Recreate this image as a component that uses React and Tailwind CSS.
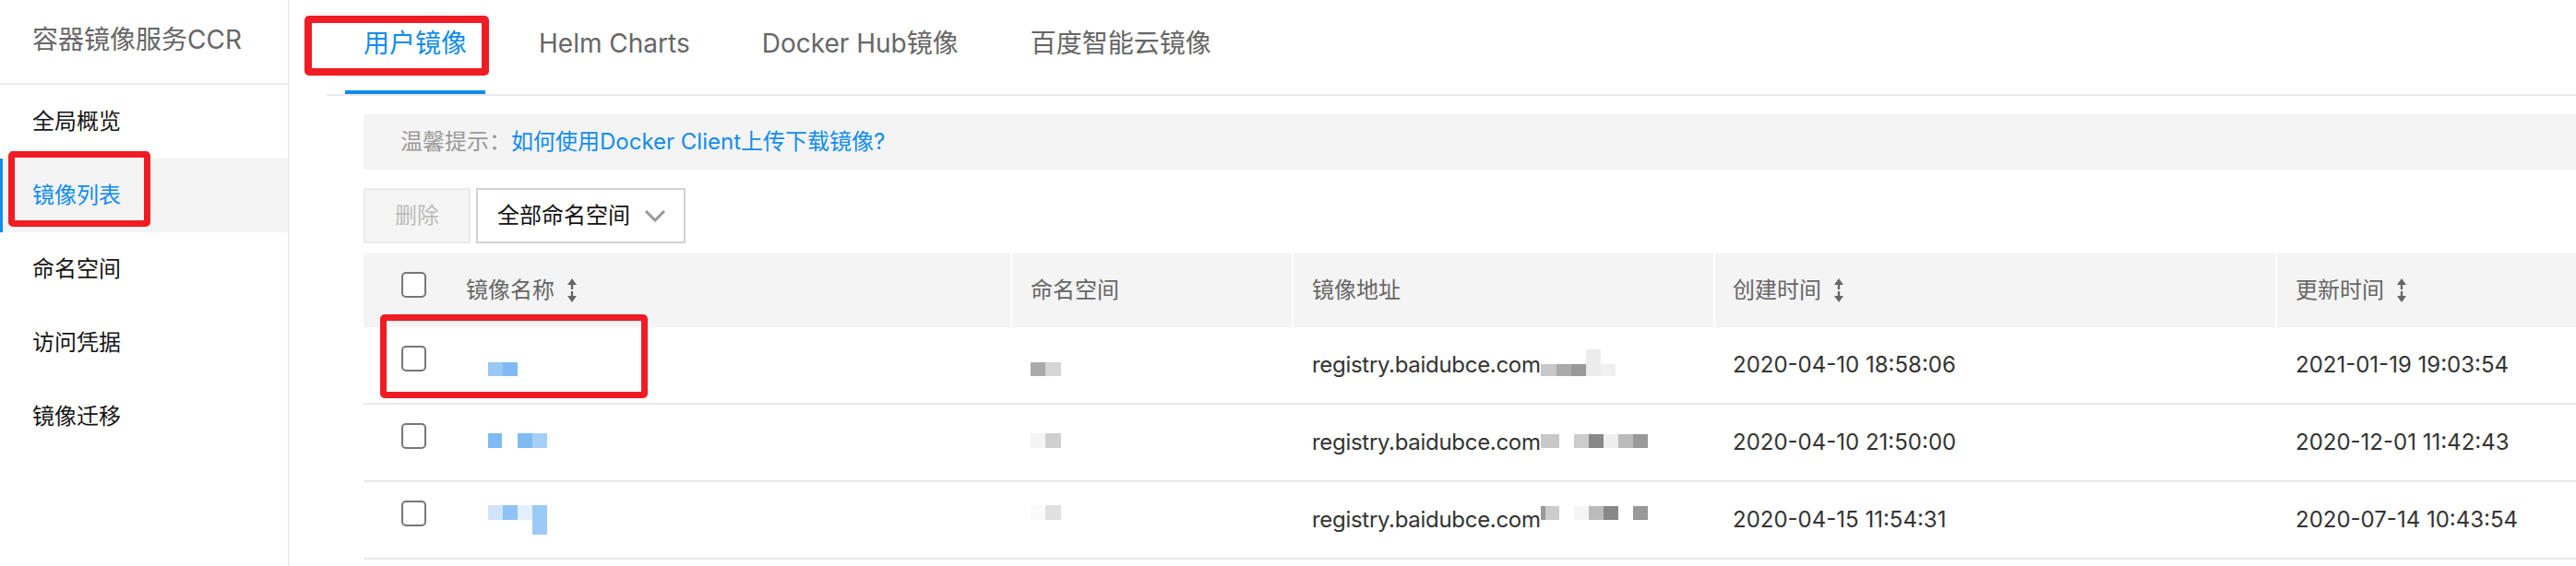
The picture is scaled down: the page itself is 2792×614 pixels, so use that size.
import React from 'react';

const menu = ['全局概览', '镜像列表', '命名空间', '访问凭据', '镜像迁移'];
const tabs = ['用户镜像', 'Helm Charts', 'Docker Hub镜像', '百度智能云镜像'];

// blurred cells from the screenshot: [x, y, w, h, fill]
const rows = [
  {
    name: [[0, 21, 16, 15, '#99c8f5'], [16, 21, 16, 15, '#7fbaf3']],
    ns: [[0, 21, 16, 15, '#aaaaaa'], [16, 21, 17, 15, '#d5d5d5']],
    addr: [[0, 23, 17, 13, '#c8c8c8'], [17, 23, 16, 13, '#aaaaaa'], [33, 23, 16, 13, '#999999'], [49, 7, 16, 29, '#ececec'], [65, 23, 16, 13, '#f0f0f0']],
    created: '2020-04-10 18:58:06',
    updated: '2021-01-19 19:03:54',
  },
  {
    name: [[0, 14, 15, 16, '#7fbaf3'], [32, 14, 16, 16, '#7fbaf3'], [48, 14, 16, 16, '#a6cff7']],
    ns: [[0, 14, 16, 16, '#f4f4f4'], [16, 14, 17, 16, '#cfcfcf']],
    addr: [[0, 15, 20, 15, '#c8c8c8'], [36, 15, 16, 15, '#cccccc'], [52, 15, 16, 15, '#888888'], [68, 15, 16, 15, '#eeeeee'], [84, 15, 16, 15, '#bbbbbb'], [100, 15, 16, 15, '#999999']],
    created: '2020-04-10 21:50:00',
    updated: '2020-12-01 11:42:43',
  },
  {
    name: [[0, 8, 16, 16, '#d0e5fb'], [16, 8, 16, 16, '#8fc2f5'], [32, 8, 16, 16, '#e3effc'], [48, 8, 16, 32, '#9ccaf6']],
    ns: [[0, 8, 16, 16, '#fafafa'], [16, 8, 17, 16, '#e0e0e0']],
    addr: [[0, 9, 5, 15, '#999999'], [5, 9, 15, 15, '#cccccc'], [36, 9, 16, 15, '#f5f5f5'], [52, 9, 16, 15, '#bbbbbb'], [68, 9, 16, 15, '#888888'], [100, 9, 16, 15, '#999999']],
    created: '2020-04-15 11:54:31',
    updated: '2020-07-14 10:43:54',
  },
];

function Mosaic({ blocks, width }) {
  return (
    <svg width={width} height="48" className="shrink-0">
      {blocks.map(([x, y, w, h, c], i) => (
        <rect key={i} x={x} y={y} width={w} height={h} fill={c} />
      ))}
    </svg>
  );
}

function SortIcon() {
  return (
    <svg width="16" height="28" viewBox="0 0 16 28" className="ml-[11px] shrink-0">
      <path d="M8 1 L13 8 H3 Z" fill="#666" />
      <path d="M8 7 V13" stroke="#666" strokeWidth="2.4" />
      <path d="M8 15 V21" stroke="#666" strokeWidth="2.4" />
      <path d="M8 27 L13 20 H3 Z" fill="#666" />
    </svg>
  );
}

function Checkbox({ className = '' }) {
  return <div className={`w-[27px] h-[28px] shrink-0 rounded-[5px] border-2 border-[#777] bg-white ${className}`} />;
}

const cols = 'grid grid-cols-[701px_303px_455px_607px_1fr] gap-x-[2px]';

export default function App() {
  return (
    <div className="relative flex h-[614px] w-full overflow-hidden bg-white font-['Inter','Noto_Sans_CJK_SC',sans-serif]">
      {/* sidebar */}
      <aside className="w-[314px] shrink-0 border-r-2 border-[#ececec]">
        <div className="h-[92px] border-b-2 border-[#ebebeb] pl-[35px] flex items-center text-[28px] text-[#666] pb-[4px]">
          容器镜像服务CCR
        </div>
        {menu.map((m, i) => (
          <div
            key={m}
            className={
              i === 1
                ? 'h-[80px] flex items-center pl-[32px] text-[24px] text-[#108cee] bg-[#f4f4f4] border-l-[3px] border-[#108cee]'
                : 'h-[80px] flex items-center pl-[35px] text-[24px] text-[#151515]'
            }
          >
            {m}
          </div>
        ))}
      </aside>

      {/* main */}
      <main className="flex-1 min-w-0">
        <nav className="ml-[40px] pl-[20px] flex gap-[38px] border-b-2 border-[#e8e8e8]">
          {tabs.map((t, i) => (
            <div
              key={t}
              className={
                i === 0
                  ? 'px-[20px] pt-[26px] pb-[30px] leading-[42px] text-[28px] text-[#108cee] border-b-4 border-[#108cee]'
                  : 'px-[20px] pt-[26px] pb-[30px] leading-[42px] text-[28px] text-[#666] border-b-4 border-transparent'
              }
            >
              {t}
            </div>
          ))}
        </nav>

        <div className="pl-[80px]">
          <div className="mt-[20px] h-[60px] bg-[#f4f4f4] flex items-center pl-[40px] text-[24px]">
            <span className="text-[#999]">温馨提示：</span>
            <span className="text-[#108cee]">如何使用Docker Client上传下载镜像?</span>
          </div>

          <div className="mt-[20px] flex gap-[6px] h-[60px]">
            <button className="w-[116px] h-full border-2 border-[#ebebeb] bg-[#f5f5f5] text-[24px] text-[#bbb]">删除</button>
            <div className="w-[227px] h-full border-2 border-[#d2d2d2] flex items-center justify-between pl-[21px] pr-[19px] text-[24px] text-[#111]">
              <span>全部命名空间</span>
              <svg width="24" height="14" viewBox="0 0 24 14">
                <path d="M2 2 L12 12 L22 2" fill="none" stroke="#999" strokeWidth="3" />
              </svg>
            </div>
          </div>

          {/* table */}
          <div className="mt-[11px]">
            <div className={`${cols} h-[80px] text-[24px] text-[#666]`}>
              <div className="bg-[#f4f4f4] flex items-center pl-[41px]">
                <Checkbox className="mb-[12px]" />
                <span className="ml-[43px]">镜像名称</span>
                <SortIcon />
              </div>
              <div className="bg-[#f4f4f4] flex items-center pl-[20px]">命名空间</div>
              <div className="bg-[#f4f4f4] flex items-center pl-[20px]">镜像地址</div>
              <div className="bg-[#f4f4f4] flex items-center pl-[19px]">
                <span>创建时间</span>
                <SortIcon />
              </div>
              <div className="bg-[#f4f4f4] flex items-center pl-[20px]">
                <span>更新时间</span>
                <SortIcon />
              </div>
            </div>

            {rows.map((r, i) => (
              <div key={i} className={`${cols} h-[84px] border-b-2 border-[#e8e8e8] text-[24px] text-[#333]`}>
                <div className="flex items-center pl-[41px]">
                  <Checkbox className="mb-[14px]" />
                  <div className="ml-[67px]">
                    <Mosaic blocks={r.name} width={64} />
                  </div>
                </div>
                <div className="flex items-center pl-[20px]">
                  <Mosaic blocks={r.ns} width={33} />
                </div>
                <div className="flex items-center pl-[20px]">
                  <span className="tracking-[-0.3px]">registry.baidubce.com</span>
                  <Mosaic blocks={r.addr} width={120} />
                </div>
                <div className="flex items-center pl-[19px]">{r.created}</div>
                <div className="flex items-center pl-[20px]">{r.updated}</div>
              </div>
            ))}
          </div>
        </div>
      </main>

      {/* red annotation boxes */}
      <div className="absolute left-[9px] top-[164px] w-[154px] h-[82px] border-[7px] border-[#f01c24] rounded-[5px]" />
      <div className="absolute left-[330px] top-[17px] w-[200px] h-[65px] border-[8px] border-[#f01c24] rounded-[5px]" />
      <div className="absolute left-[412px] top-[341px] w-[290px] h-[91px] border-[7px] border-[#f01c24] rounded-[5px]" />
    </div>
  );
}
